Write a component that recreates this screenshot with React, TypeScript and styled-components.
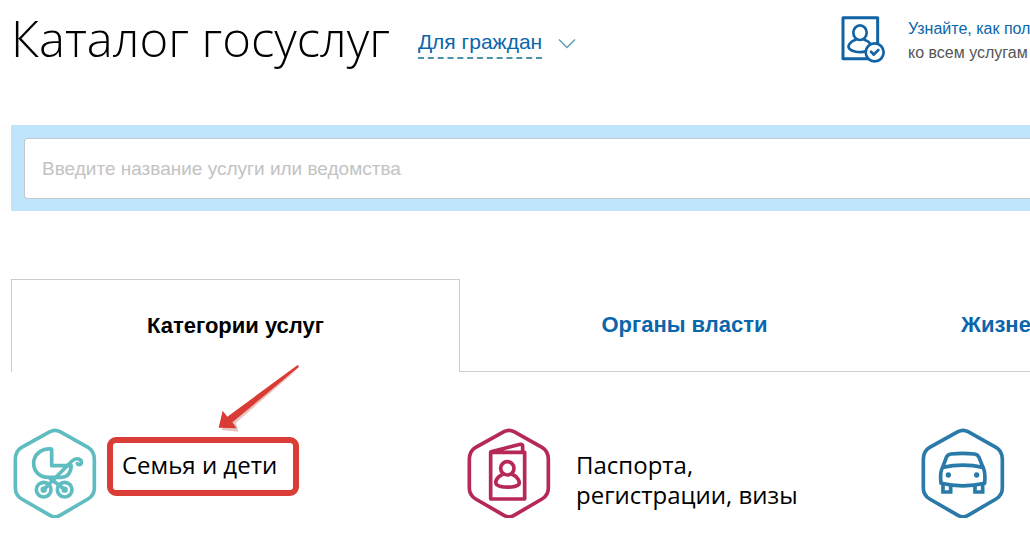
import React from "react";
import styled, { createGlobalStyle } from "styled-components";

const GlobalStyle = createGlobalStyle`
  *, *::before, *::after { box-sizing: border-box; }
  body {
    margin: 0;
    background: #fff;
    color: #000;
    font-family: "Liberation Sans", Arial, sans-serif;
    overflow-x: hidden;
  }
`;

const Page = styled.div`
  padding-left: 11px;
  overflow: hidden;
`;

const Header = styled.header`
  display: flex;
  align-items: flex-start;
  height: 125px;
  padding-top: 8px;
  white-space: nowrap;
`;

const Title = styled.h1`
  margin: 0;
  font: 300 49px/60px "Open Sans", "Noto Sans", sans-serif;
`;

const AudienceButton = styled.button`
  display: flex;
  align-items: center;
  gap: 16px;
  margin: 20px 0 0 28px;
  padding: 0;
  border: 0;
  background: none;
  color: #0b66ac;
  font: 21px/28px "Liberation Sans", Arial, sans-serif;
  cursor: pointer;
`;

const AudienceLabel = styled.span`
  padding-bottom: 1px;
  border-bottom: 2px dashed #4b93a8;
`;

const Help = styled.aside`
  display: flex;
  gap: 22px;
  flex: 0 0 190px;
  margin: 7px 0 0 auto;
  overflow: hidden;
  svg { flex-shrink: 0; }
`;

const HelpText = styled.p`
  display: flex;
  flex-direction: column;
  margin: 2px 0 0;
  color: #555;
  font-size: 16px;
  line-height: 24px;
`;

const HelpLink = styled.a`
  color: #0b66ac;
  text-decoration: none;
`;

const SearchBar = styled.form`
  padding: 13px 0 12px 13px;
  background: #c0e4fb;
`;

const SearchInput = styled.input`
  display: block;
  width: 100%;
  height: 61px;
  padding: 0 17px;
  border: 1px solid #c3c8cc;
  border-right: 0;
  border-radius: 4px 0 0 4px;
  background: #fff;
  font: 19px/24px "Liberation Sans", Arial, sans-serif;
  &::placeholder { color: #c3c3c3; opacity: 1; }
`;

const Tabs = styled.nav`
  display: grid;
  grid-template-columns: minmax(0, 449fr) minmax(0, 449fr) minmax(0, 121fr);
  margin-top: 68px;
`;

const Tab = styled.button<{ $active?: boolean; $start?: boolean }>`
  height: 93px;
  padding: ${(p) => (p.$start ? "0 0 0 52px" : "0")};
  border: 1px solid #ccc;
  border-color: ${(p) => (p.$active ? "#ccc #ccc transparent" : "transparent transparent #ccc")};
  border-width: ${(p) => (p.$active ? "1px 1px 0" : "0 0 1px")};
  background: none;
  color: ${(p) => (p.$active ? "#000" : "#0b66ac")};
  font: bold 22px/24px "Liberation Sans", Arial, sans-serif;
  text-align: ${(p) => (p.$start ? "left" : "center")};
  white-space: nowrap;
  cursor: pointer;
`;

const Categories = styled.main`
  display: grid;
  grid-template-columns: minmax(0, 454fr) minmax(0, 454fr) minmax(0, 110fr);
  padding: 56px 0 24px 1px;
`;

const Category = styled.a`
  display: flex;
  align-items: flex-start;
  gap: 24px;
  color: #000;
  text-decoration: none;
`;

const CategoryName = styled.span`
  position: relative;
  margin-top: 22px;
  font: 24px/30px "Open Sans", "Noto Sans", sans-serif;
`;

const Highlight = styled.span`
  position: absolute;
  inset: -13px -22px -16px -15px;
  border: 6px solid #da3d35;
  border-radius: 9px;
`;

const Arrow = styled.svg`
  position: absolute;
  left: 92px;
  bottom: 48px;
`;

const hexagon =
  "M150 35Q165 27 180 35L264 82Q283 93 283 118V204Q283 226 264 237L180 286Q165 295 150 286L65 237Q46 226 46 204V118Q46 93 65 82Z";

function CategoryIcon({ color, children }: { color: string; children: React.ReactNode }) {
  return (
    <svg width="86" height="90" viewBox="36 24 258 270" fill="none" stroke={color} strokeWidth="11" strokeLinejoin="round" strokeLinecap="round" aria-hidden="true">
      <path d={hexagon} />
      {children}
    </svg>
  );
}

export default function App() {
  return (
    <>
      <GlobalStyle />
      <Page>
        <Header>
          <Title>Каталог госуслуг</Title>
          <AudienceButton type="button">
            <AudienceLabel>Для граждан</AudienceLabel>
            <svg width="18" height="11" viewBox="0 0 18 11" fill="none" stroke="#5d9dba" strokeWidth="1.5" aria-hidden="true">
              <path d="M1 1.5 9 9.5 17 1.5" />
            </svg>
          </AudienceButton>
          <Help>
            <svg width="46" height="48" viewBox="30 45 138 144" fill="none" stroke="#1263a5" strokeWidth="8" strokeLinejoin="round" strokeLinecap="round" aria-hidden="true">
              <path strokeWidth="9" d="M39 53H143V176H39Z" />
              <path d="M77 119C58 125 52 140 58 146C68 158 97 158 108 153M103 119C113 122 118 126 121 132" />
              <ellipse cx="90" cy="98" rx="20" ry="22" />
              <circle cx="134" cy="157" r="27" fill="#fff" />
              <path d="M123 155 131 164 145 150" />
            </svg>
            <HelpText>
              <HelpLink href="#access">Узнайте, как пол</HelpLink>
              <span>ко всем услугам</span>
            </HelpText>
          </Help>
        </Header>

        <SearchBar role="search">
          <SearchInput type="text" aria-label="Введите название услуги или ведомства" placeholder="Введите название услуги или ведомства" />
        </SearchBar>

        <Tabs>
          <Tab type="button" $active>Категории услуг</Tab>
          <Tab type="button">Органы власти</Tab>
          <Tab type="button" $start>Жизне</Tab>
        </Tabs>

        <Categories>
          <Category href="#family">
            <CategoryIcon color="#5fbdc1">
              <path d="M155 87V137H214C212 158 202 172 184 172H146C118 172 101 154 101 130C101 104 124 84 155 87Z" />
              <path d="M147 193 216 123C230 110 246 118 244 129C242 136 234 135 232 131M151 176 182 199" />
              <circle cx="131" cy="209" r="22" />
              <circle cx="194" cy="209" r="22" />
              <path d="M131 209 147 193M194 209 182 199" />
              <circle cx="131" cy="209" r="4" />
              <circle cx="194" cy="209" r="4" />
            </CategoryIcon>
            <CategoryName>
              Семья и дети
              <Highlight />
              <Arrow width="90" height="70" viewBox="340 20 270 210" aria-hidden="true">
                <path fill="#e9c5c1" d="M597 37 406 202 413 229 362 224 390 190Z" />
                <path fill="#d93c34" d="M590 30Q595 28 594 36L395 201 408 219 354 217 366 166 380 184Z" />
              </Arrow>
            </CategoryName>
          </Category>
          <Category href="#passports">
            <CategoryIcon color="#b62856">
              <g transform="translate(19 0)">
                <path d="M91 97H193V237H91ZM92 95 180 73Q187 72 187 79V97" />
                <circle cx="141" cy="145" r="20" />
                <path d="M127 163C108 171 103 187 109 194C120 204 164 204 175 194C180 186 173 170 155 163" />
              </g>
            </CategoryIcon>
            <CategoryName>Паспорта,<br />регистрации, визы</CategoryName>
          </Category>
          <Category href="#transport" aria-label="Транспорт">
            <CategoryIcon color="#297aa8">
              <g transform="translate(7 0)">
                <path d="M97 142 108 112Q112 103 122 102Q157 98 192 102Q202 103 206 112L218 142" />
                <path d="M97 142Q158 129 218 142Q226 156 223 190Q158 205 92 190Q88 156 97 142Z" />
                <path strokeLinejoin="miter" d="M98 196V216H121V198M194 198V216H217V196" />
                <g fill="#297aa8" strokeWidth="6"><circle cx="114" cy="165" r="5" /><circle cx="199" cy="165" r="5" /></g>
              </g>
            </CategoryIcon>
          </Category>
        </Categories>
      </Page>
    </>
  );
}
